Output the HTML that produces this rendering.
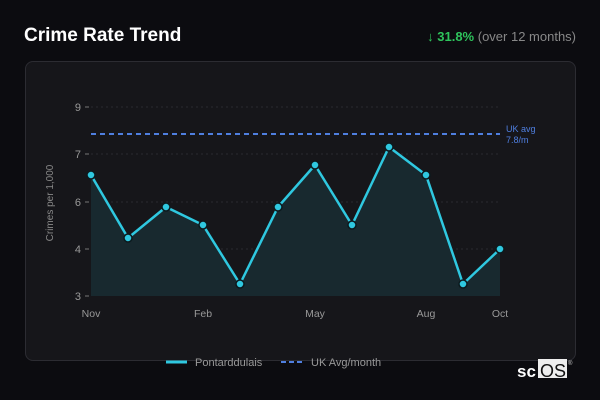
<!DOCTYPE html>
<html><head><style>
body{margin:0;width:600px;height:400px;background:#0c0c10;font-family:"Liberation Sans","DejaVu Sans",sans-serif;overflow:hidden;position:relative}
.t{position:absolute;left:24px;top:25px;color:#fff;font-weight:bold;font-size:19px}
.r{position:absolute;right:24px;top:29px;font-size:13px;color:#888}
.r b{color:#2ec45c}
.card{position:absolute;left:25px;top:61px;width:549px;height:298px;background:#16161a;border:1px solid #2c2c32;border-radius:8px}
</style></head><body>
<div class="t">Crime Rate Trend</div>
<div class="r"><b>↓ 31.8%</b> (over 12 months)</div>
<div class="card"></div>
<svg width="600" height="400" style="position:absolute;left:0;top:0" font-family="Liberation Sans, sans-serif">
<g stroke="#2a2a30" stroke-dasharray="2,3" stroke-width="1">
<line x1="91" y1="107" x2="500" y2="107"/><line x1="91" y1="154" x2="500" y2="154"/><line x1="91" y1="202" x2="500" y2="202"/><line x1="91" y1="249" x2="500" y2="249"/>
</g>
<g stroke="#777" stroke-width="1"><line x1="85" y1="107" x2="89" y2="107"/><line x1="85" y1="154" x2="89" y2="154"/><line x1="85" y1="202" x2="89" y2="202"/><line x1="85" y1="249" x2="89" y2="249"/><line x1="85" y1="296" x2="89" y2="296"/></g>
<g fill="#999" font-size="11" text-anchor="end"><text x="81" y="111">9</text><text x="81" y="158">7</text><text x="81" y="206">6</text><text x="81" y="253">4</text><text x="81" y="300">3</text></g>
<text transform="translate(53,203) rotate(-90)" fill="#888" font-size="10" text-anchor="middle">Crimes per 1,000</text>
<line x1="91" y1="134" x2="500" y2="134" stroke="#4f7fe0" stroke-width="2" stroke-dasharray="5,4"/>
<text x="506" y="132" fill="#4f7fe0" font-size="9">UK avg</text><text x="506" y="143" fill="#4f7fe0" font-size="9">7.8/m</text>
<path d="M91,175 L128,238 L166,207 L203,225 L240,284 L278,207 L315,165 L352,225 L389,147 L426,175 L463,284 L500,249 L500,296 L91,296Z" fill="#18292f"/>
<polyline points="91,175 128,238 166,207 203,225 240,284 278,207 315,165 352,225 389,147 426,175 463,284 500,249" fill="none" stroke="#2fc8e0" stroke-width="2.5" stroke-linejoin="round"/>
<g fill="#2fc8e0" stroke="#0c1a1e" stroke-width="1.5">
<circle cx="91" cy="175" r="4"/><circle cx="128" cy="238" r="4"/><circle cx="166" cy="207" r="4"/><circle cx="203" cy="225" r="4"/><circle cx="240" cy="284" r="4"/><circle cx="278" cy="207" r="4"/><circle cx="315" cy="165" r="4"/><circle cx="352" cy="225" r="4"/><circle cx="389" cy="147" r="4"/><circle cx="426" cy="175" r="4"/><circle cx="463" cy="284" r="4"/><circle cx="500" cy="249" r="4"/></g>
<g fill="#999" font-size="10.5" text-anchor="middle"><text x="91" y="317">Nov</text><text x="203" y="317">Feb</text><text x="315" y="317">May</text><text x="426" y="317">Aug</text><text x="500" y="317">Oct</text></g>
<line x1="166" y1="362" x2="187" y2="362" stroke="#2fc8e0" stroke-width="3"/>
<text x="195" y="366" fill="#999" font-size="11">Pontarddulais</text>
<line x1="281" y1="362" x2="303" y2="362" stroke="#4f7fe0" stroke-width="2" stroke-dasharray="5,3"/>
<text x="311" y="366" fill="#999" font-size="11">UK Avg/month</text>
<text x="517" y="377" fill="#fff" font-size="17" font-weight="bold">sc</text>
<rect x="538" y="359" width="29" height="19" fill="#eee"/>
<text x="540" y="377" fill="#111" font-size="18">OS</text>
<text x="568" y="365" fill="#ccc" font-size="6">®</text>
</svg>
</body></html>
